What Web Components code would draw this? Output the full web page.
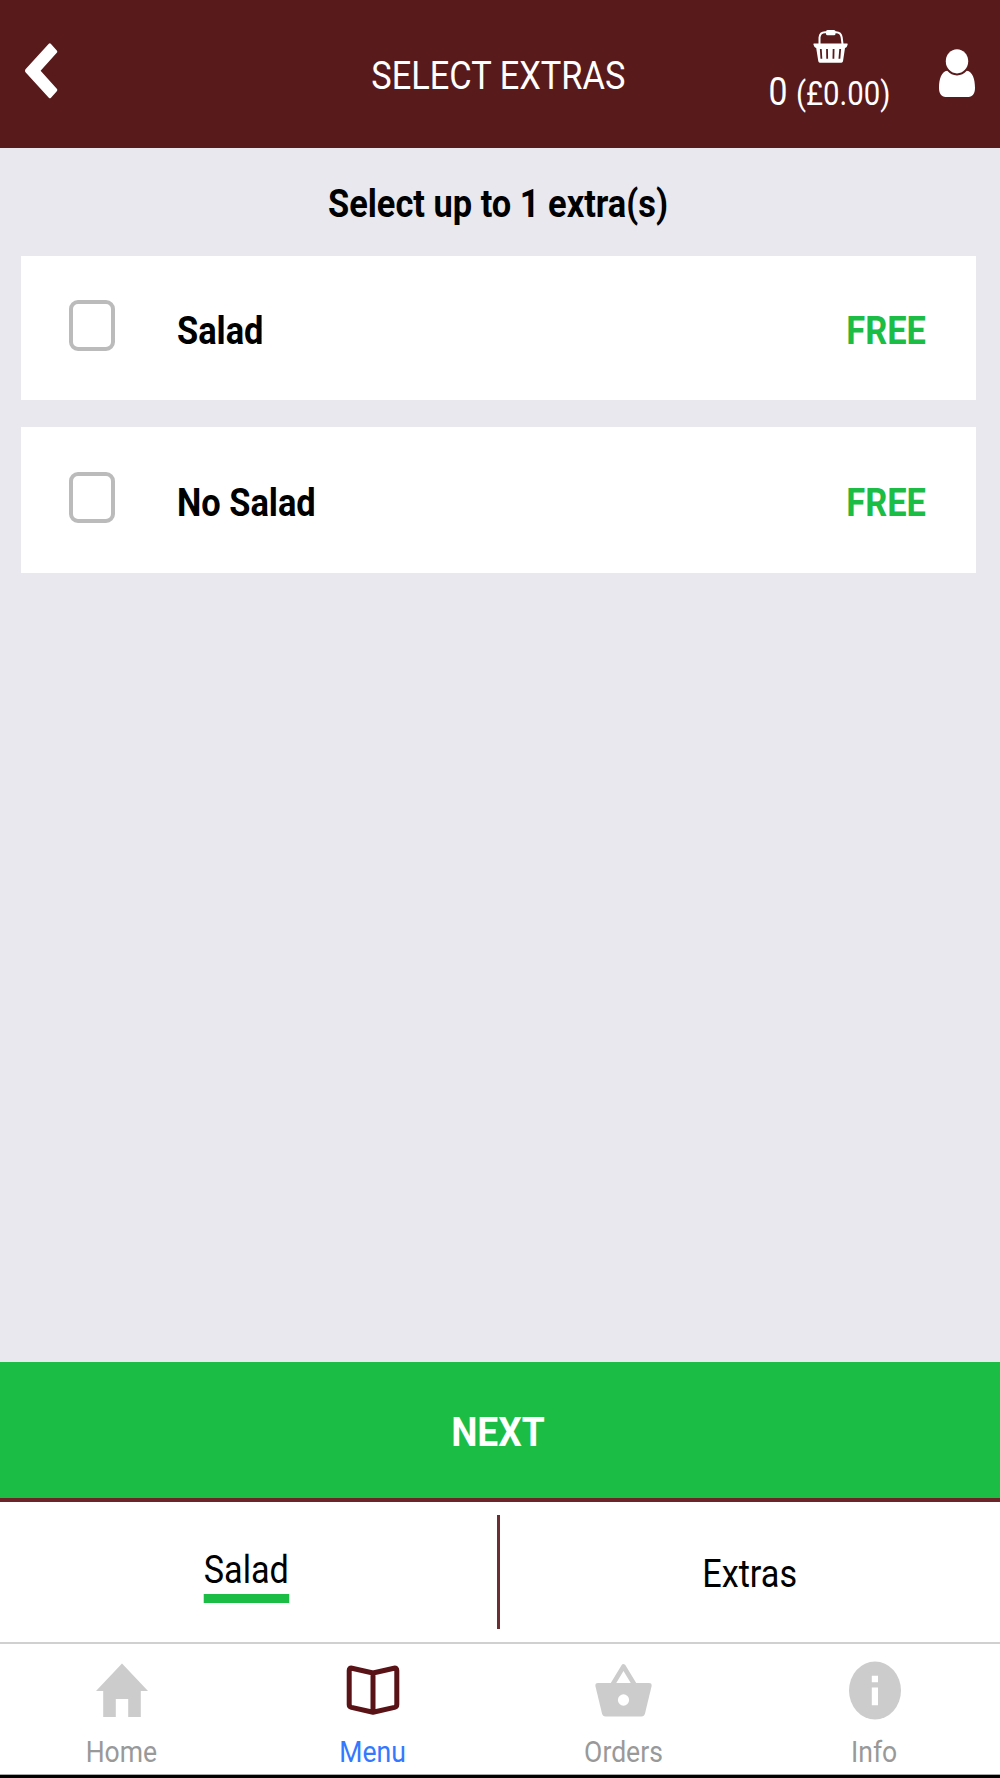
<!DOCTYPE html>
<html lang="en"><head><meta charset="utf-8"/><title>Select Extras</title><style>
    body {
      margin: 0;
      height: 1778px;
      overflow: hidden;
      background: #E9E8EE;
      font-family: Roboto, "Liberation Sans", sans-serif;
    }
  </style><script>
function createCustomElement(name) {
  let content = document.getElementById(name).content;
  customElements.define(name,
    class extends HTMLElement {
      constructor() {
        super();
        this.attachShadow({mode: 'open'})
          .appendChild(content.cloneNode(true));
      }
    }
  );
}
</script></head><body>

<template id="app-screen"><style>
  /* The screen bleeds slightly over both window edges. */
  :host {
    display: flex;
    flex-direction: column;
    width: 1004px;
    height: 1778px;
    margin-left: -4px;
    background: #E9E8EE;
    color: #000;
  }
  main {
    flex: 1;
    min-height: 0;
  }
  .system-bar {
    height: 3px;
    background: #000;
    border-top: 1px solid #AAA;
  }
</style>
<slot name="header"></slot>
<main><slot></slot></main>
<slot name="footer"></slot>
<div class="system-bar"></div></template>

<template id="narrow-text"><style>
  :host {
    display: block;
    white-space: nowrap;
    transform: scaleX(var(--squeeze, 0.905));
    transform-origin: var(--origin, center);
  }
</style><slot></slot></template>

<template id="app-header"><style>
  :host {
    display: grid;
    grid-template-columns: 1fr auto 1fr;
    height: 148px;
    flex: none;
    box-sizing: border-box;
    padding: 0 25px 0 29px;
    background: #591A1B;
    color: #FFF;
    font-size: 38px;
    line-height: 44px;
  }
  .back {
    padding-top: 43px;
  }
  .title {
    padding-top: 54px;
    /* side paddings of the bar differ by 4px */
    margin-left: -3px;
  }
  .right {
    display: flex;
    justify-content: flex-end;
    gap: 49px;
  }
  .basket {
    display: flex;
    flex-direction: column;
    align-items: center;
    gap: 7px;
    width: 120px;
    padding-top: 29px;
    --squeeze: 0.89;
  }
  .user {
    padding-top: 49px;
  }
  svg {
    display: block;
  }
</style>
<div class="back">
  <svg width="33" height="56" viewBox="0 0 33 56" fill="#fff">
    <path d="M23.8.8Q24.9-.2 26 1L31.8 7.4Q32.8 8.7 31.8 9.8L15.6 27.8 31.8 45.8Q32.8 47 31.8 48.2L26 54.7Q24.9 55.9 23.8 54.8L.5 29.3Q-.5 27.8 .5 26.3Z"/>
  </svg>
</div>
<div class="title"><narrow-text><slot></slot></narrow-text></div>
<div class="right">
  <div class="basket">
    <svg width="35" height="34" viewBox="0 0 35 34">
      <path d="M6.5 15V8.5Q7 3.2 12 3.2H23Q28 3.2 28.7 8.5L29.5 15" fill="none" stroke="#fff" stroke-width="2"/>
      <rect x="13" y="1" width="9.5" height="5.2" rx="1.5" fill="#fff"/>
      <path d="M1 14.6H34Q35 14.6 34.6 15.8L33.8 17.8Q33.4 18.8 32 19L30 32.3Q29.7 33.7 28.4 33.7H6.8Q5.6 33.7 5.3 32.3L3.2 19Q1.9 18.8 1.4 17.8L.5 15.8Q.1 14.6 1 14.6Z" fill="#fff"/>
      <g stroke="#591A1B" stroke-width="1.8"><path d="M7.8 20 8.4 29.8M14 20 14.2 29.8M20.6 20 20.4 29.8M27.2 20 26.4 29.8"/></g>
    </svg>
    <narrow-text><slot name="basket"></slot></narrow-text>
  </div>
  <div class="user">
    <svg width="36" height="48" viewBox="0 0 36 48" fill="#fff">
      <ellipse cx="18" cy="12.3" rx="11.2" ry="12.1"/>
      <path d="M8.2 21.8C11 25 14 26.4 18 26.4S25 25 27.8 21.8C33.5 22.5 36 30 36 39 36 44.5 33.5 48 29.5 48H6.5C2.5 48 0 44.5 0 39 0 30 2.5 22.5 8.2 21.8Z"/>
    </svg>
  </div>
</div></template>

<template id="extras-list"><style>
  :host {
    display: block;
    font-size: 38px;
    font-weight: 700;
    line-height: 44px;
  }
  h1 {
    margin: 0;
    padding: 34px 0 30px;
    font: inherit;
    text-align: center;
  }
  .options {
    display: grid;
    grid-template-rows: 144px 146px;
    gap: 27px;
    padding: 0 24px 0 25px;
  }
</style>
<h1><narrow-text><slot name="heading"></slot></narrow-text></h1>
<div class="options"><slot></slot></div></template>

<template id="extra-option"><style>
  :host {
    display: flex;
    align-items: center;
    box-sizing: border-box;
    padding: 0 50px 0 48px;
    background: #FFF;
  }
  .box {
    width: 46px;
    height: 51px;
    box-sizing: border-box;
    border: 4px solid #BBB;
    border-radius: 9px;
    margin: 0 62px 5px 0;
  }
  .name {
    flex: 1;
    padding-top: 5px;
    --origin: left;
  }
  .price {
    padding-top: 5px;
    color: #1BBD44;
    --origin: right;
  }
</style>
<div class="box"></div>
<div class="name"><narrow-text><slot></slot></narrow-text></div>
<div class="price"><narrow-text><slot name="price"></slot></narrow-text></div></template>

<template id="next-button"><style>
  :host {
    display: block;
    flex: none;
  }
  button {
    display: block;
    width: 100%;
    height: 136px;
    margin: 0;
    border: 0;
    padding: 4px 0 0;
    background: #1BBD44;
    color: #FFF;
    font: 700 41px/48px Roboto, "Liberation Sans", sans-serif;
  }
</style><button><narrow-text><slot></slot></narrow-text></button></template>

<template id="step-tabs"><style>
  :host {
    display: flex;
    flex: none;
    height: 144px;
    box-sizing: border-box;
    border-top: 4px solid #6B2529;
    background: #FFF;
  }
  .divider {
    flex: none;
    width: 3px;
    height: 114px;
    margin-top: 13px;
    background: #6B2F33;
  }
</style>
<slot name="current"></slot>
<div class="divider"></div>
<slot name="other"></slot></template>

<template id="step-tab"><style>
  :host {
    flex: 1;
    display: flex;
    justify-content: center;
    align-items: flex-start;
    font-size: 38px;
    line-height: 44px;
    padding-top: 50px;
    --squeeze: 0.9;
  }
  :host([active]) {
    padding-top: 46px;
  }
  :host([active]) .label {
    border-bottom: 9px solid #1BBD44;
    padding-bottom: 2px;
  }
</style><narrow-text><div class="label"><slot></slot></div></narrow-text></template>

<template id="nav-bar"><style>
  :host {
    display: grid;
    grid-template-columns: repeat(4, 1fr);
    flex: none;
    height: 132px;
    box-sizing: border-box;
    border-top: 2px solid #D0D0D0;
    background: #FFF;
  }
</style><slot></slot></template>

<template id="nav-item"><style>
  :host {
    display: flex;
    flex-direction: column;
    align-items: center;
    color: #999;
    font-size: 30px;
    line-height: 36px;
    --squeeze: 0.885;
  }
  :host([active]) {
    color: #3478FF;
  }
  .icon {
    height: 60px;
    padding-top: 17px;
    margin-bottom: 13px;
  }
</style>
<div class="icon"><slot name="icon"></slot></div>
<narrow-text><slot></slot></narrow-text></template>

<script>
  ['narrow-text', 'app-screen', 'app-header', 'extras-list', 'extra-option',
   'next-button', 'step-tabs', 'step-tab', 'nav-bar', 'nav-item']
    .forEach(createCustomElement);
</script>

<app-screen>
  <app-header slot="header">
    SELECT EXTRAS
    <span slot="basket">0 <span style="font-size: 33px">(£0.00)</span></span>
  </app-header>

  <extras-list>
    <span slot="heading">Select up to 1 extra(s)</span>
    <extra-option>Salad<span slot="price">FREE</span></extra-option>
    <extra-option>No Salad<span slot="price">FREE</span></extra-option>
  </extras-list>

  <next-button slot="footer">NEXT</next-button>

  <step-tabs slot="footer">
    <step-tab slot="current" active>Salad</step-tab>
    <step-tab slot="other">Extras</step-tab>
  </step-tabs>

  <nav-bar slot="footer">
    <nav-item>
      <svg slot="icon" width="52" height="60" viewBox="0 0 52 60" fill="#CCC">
        <path d="M26 2.5 52 30H44.8V56H32.2V38H19.8V56H7.2V30H0Z"/>
      </svg>
      Home
    </nav-item>
    <nav-item active>
      <svg slot="icon" width="54" height="60" viewBox="0 0 54 60" fill="none" stroke="#591216" stroke-width="5" stroke-linejoin="round">
        <path d="M27 12 6 7.2Q3.2 6.7 3.2 9.5V43.5Q3.2 45.8 5.5 46.4L27 51.3 48.5 46.4Q50.8 45.8 50.8 43.5V9.5Q50.8 6.7 48 7.2ZV51.3"/>
      </svg>
      Menu
    </nav-item>
    <nav-item>
      <svg slot="icon" width="57" height="60" viewBox="0 0 57 60">
        <path d="M17 24.5 28.5 5.5 40 24.5" fill="none" stroke="#CCC" stroke-width="4.6" stroke-linejoin="round"/>
        <path d="M3 22H54Q57.2 22 56.5 25.5L50 52.5Q49.2 55.5 46.5 55.5H10.5Q7.8 55.5 7 52.5L.5 25.5Q-.2 22 3 22Z" fill="#CCC"/>
        <ellipse cx="28.5" cy="39" rx="5.6" ry="5.8" fill="#FFF"/>
      </svg>
      Orders
    </nav-item>
    <nav-item>
      <svg slot="icon" width="52" height="60" viewBox="0 0 52 60">
        <ellipse cx="26" cy="29.5" rx="26" ry="29" fill="#CCC"/>
        <path d="M22.8 14.8H29V21.3H22.8ZM22.8 26.5H29V44.2H22.8Z" fill="#FFF"/>
      </svg>
      Info
    </nav-item>
  </nav-bar>
</app-screen></body></html>
